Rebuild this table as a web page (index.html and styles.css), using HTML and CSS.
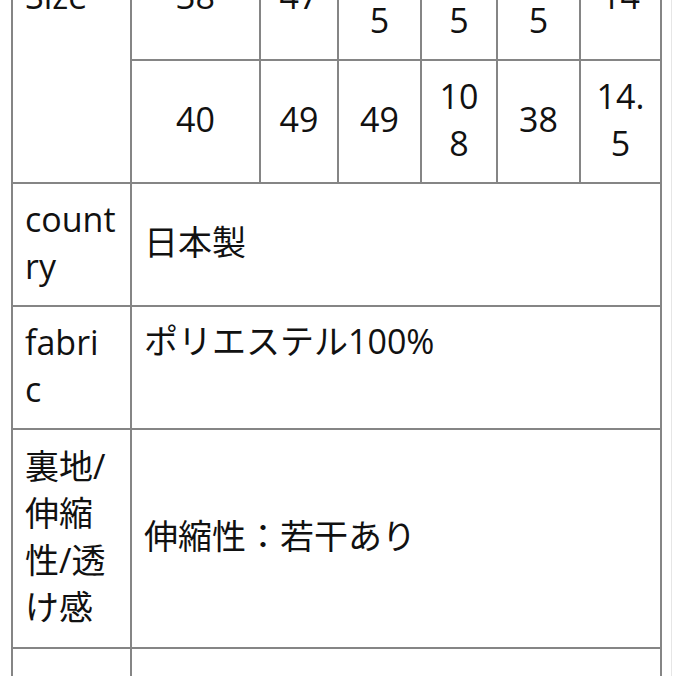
FILE: index.html
```html
<!DOCTYPE html>
<html lang="ja">
<head>
<meta charset="utf-8">
<title>サイズ表</title>
<link rel="stylesheet" href="styles.css">
</head>
<body>
<div class="page">
  <div class="sheet">
    <div class="cell label size">Size</div>
    <div class="cell num">着丈</div>
    <div class="cell num">身幅</div>
    <div class="cell num">肩幅</div>
    <div class="cell num">袖丈</div>
    <div class="cell num">裾幅</div>
    <div class="cell num">袖口</div>

    <div class="cell num">38</div>
    <div class="cell num">47</div>
    <div class="cell num">47.5</div>
    <div class="cell num">105</div>
    <div class="cell num">37.5</div>
    <div class="cell num">14</div>

    <div class="cell num">40</div>
    <div class="cell num">49</div>
    <div class="cell num">49</div>
    <div class="cell num">108</div>
    <div class="cell num">38</div>
    <div class="cell num">14.5</div>

    <div class="cell label">country</div>
    <div class="cell value">日本製</div>

    <div class="cell label">fabri<br>c</div>
    <div class="cell value top">ポリエステル100%</div>

    <div class="cell label">裏地/伸縮性/透け感</div>
    <div class="cell value">伸縮性：若干あり</div>

    <div class="cell label"></div>
    <div class="cell value"></div>
  </div>
</div>
</body>
</html>
```

FILE: styles.css
```css
html, body {
  margin: 0;
  padding: 0;
  background: #ffffff;
}

body {
  font-family: "Open Sans", "Noto Sans CJK JP", sans-serif;
  color: #111111;
  overflow: hidden;
}

.page {
  width: 671px;
  min-height: 676px;
  border-right: 1px solid #e6e6e6;
}

.sheet {
  display: grid;
  grid-template-columns: 119px 129px 78px 83px 76px 83px 81px;
  grid-template-rows: 123px 123px 123px 123px 123px 219px 123px;
  width: max-content;
  margin: -187px 0 0 11px;
  border-left: 2px solid #858585;
  border-top: 2px solid #858585;
}

.cell {
  box-sizing: border-box;
  display: flex;
  align-items: center;
  padding: 0 12px 4px;
  border-right: 2px solid #858585;
  border-bottom: 2px solid #858585;
  font-size: 34px;
  line-height: 47px;
  word-break: break-all;
}

.size {
  grid-row: span 3;
}

.num {
  justify-content: center;
  text-align: center;
}

.value {
  grid-column: span 6;
}

.value.top {
  align-items: flex-start;
  padding-top: 11px;
}
```
